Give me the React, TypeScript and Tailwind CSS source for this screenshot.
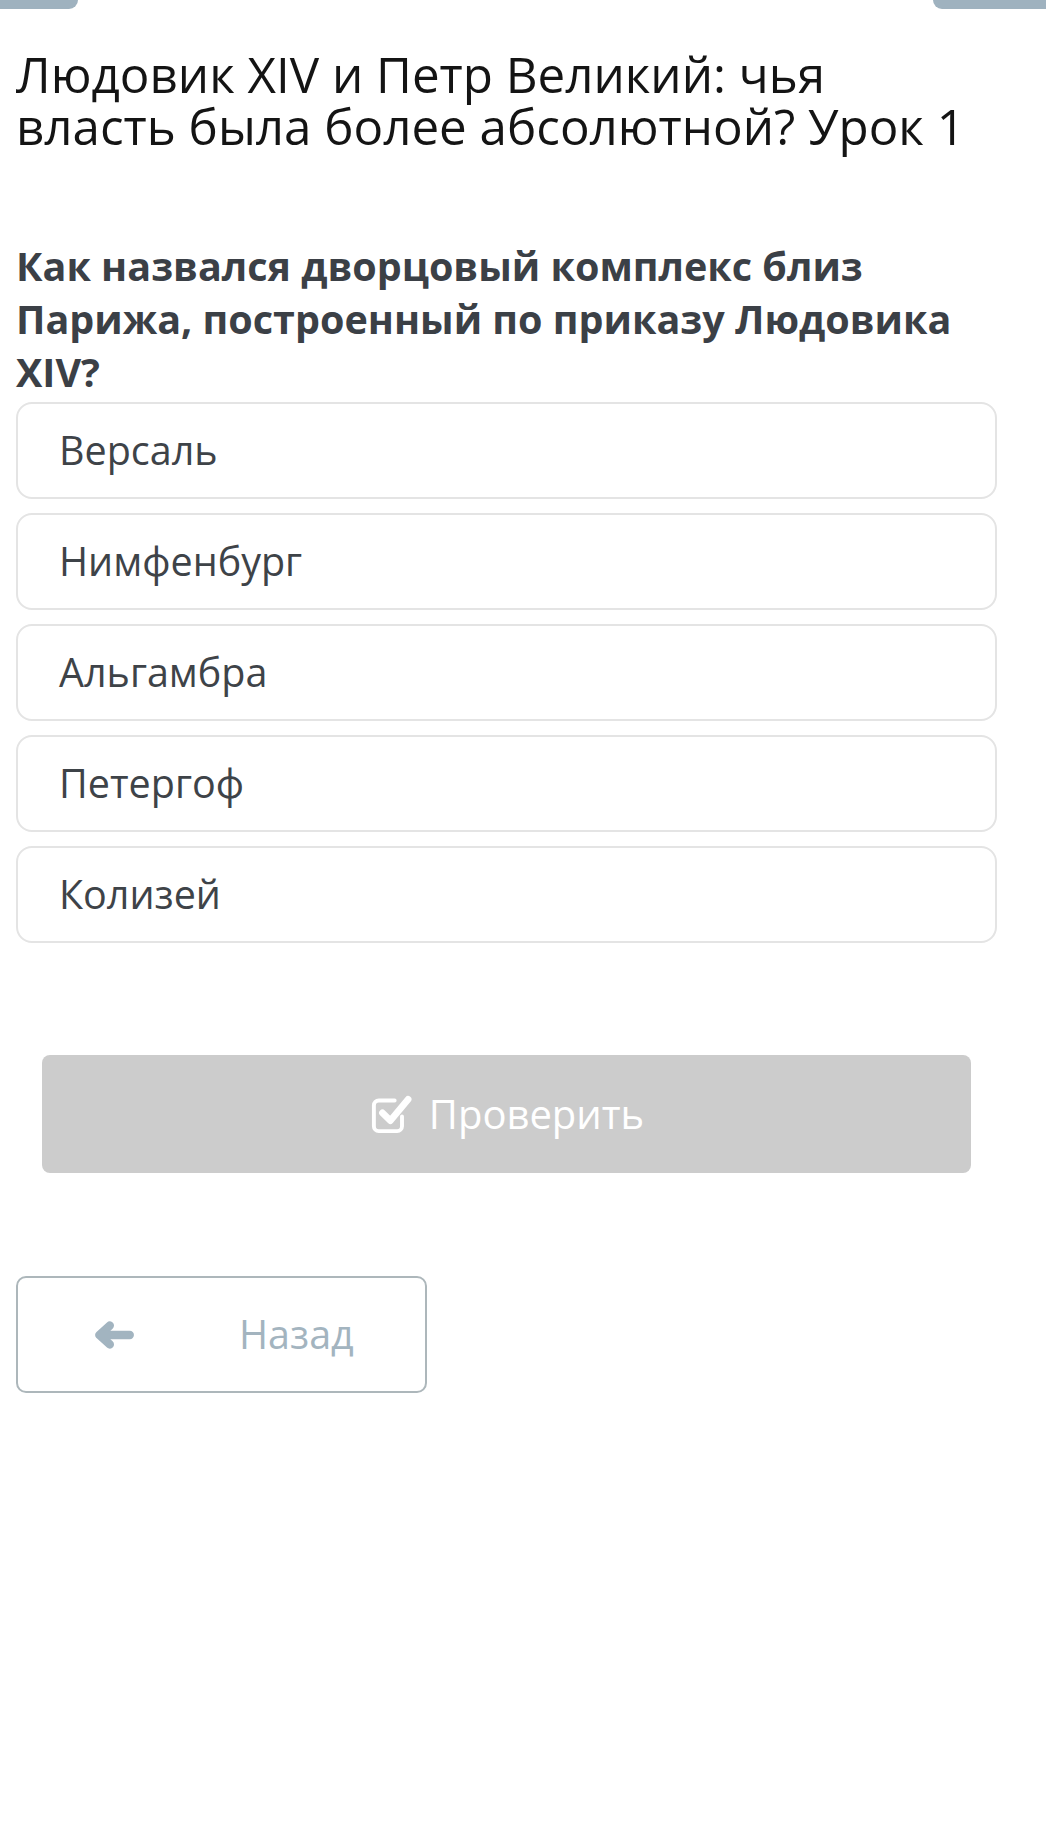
import React from "react";

const options = ["Версаль", "Нимфенбург", "Альгамбра", "Петергоф", "Колизей"];

function CheckSquareIcon() {
  return (
    <svg width="44" height="44" viewBox="0 0 36 36" fill="none">
      <path
        d="M27 20 V28 a4 4 0 0 1 -4 4 H8 a4 4 0 0 1 -4 -4 V11 a4 4 0 0 1 4 -4 H21"
        stroke="white"
        strokeWidth="3.2"
        strokeLinecap="round"
      />
      <path
        d="M11 17 L17.5 23.5 L32 6"
        stroke="white"
        strokeWidth="5.5"
        strokeLinecap="round"
        strokeLinejoin="round"
      />
    </svg>
  );
}

function ArrowLeftIcon() {
  return (
    <svg width="42" height="30" viewBox="0 0 40 28" fill="none">
      <path
        d="M35 14 H7 M16 5 L6 14 L16 23"
        stroke="#a2b4c0"
        strokeWidth="8"
        strokeLinecap="round"
        strokeLinejoin="round"
      />
    </svg>
  );
}

export default function App() {
  return (
    <div className="min-h-screen bg-white font-['Open_Sans',sans-serif]">
      {/* cut-off nav buttons at the very top */}
      <div className="flex justify-between">
        <div className="h-[9px] w-[78px] rounded-br-[10px] bg-[#9fb2bf]" />
        <div className="h-[9px] w-[113px] rounded-bl-[12px] bg-[#9fb2bf]" />
      </div>

      <div className="pl-[16px] pr-[49px]">
        <h1 className="mt-[39px] text-[49.3px] font-normal leading-[52px] text-[#141414]">
          Людовик XIV и Петр Великий: чья власть была более абсолютной? Урок 1
        </h1>

        <h2 className="mt-[88px] text-[39.5px] font-bold leading-[53px] text-[#3b4046]">
          Как назвался дворцовый комплекс близ Парижа, построенный по приказу Людовика XIV?
        </h2>

        <div className="mt-[3px] flex flex-col gap-[14px]">
          {options.map((o) => (
            <div
              key={o}
              className="flex h-[97px] items-center rounded-[16px] border-2 border-[#e4e4e4] bg-white pl-[41px] text-[39.5px] text-[#3e4348]"
            >
              {o}
            </div>
          ))}
        </div>

        <div className="mt-[112px] px-[26px]">
          <button className="flex h-[118px] w-full items-center justify-center gap-[16px] rounded-[8px] bg-[#cccccc] text-[40px] text-white">
            <CheckSquareIcon />
            <span>Проверить</span>
          </button>
        </div>

        <button className="mt-[103px] flex h-[117px] w-[411px] items-center rounded-[10px] border-2 border-[#adb7bb] bg-white pl-[75px] text-[39.5px] text-[#a3b4bf]">
          <ArrowLeftIcon />
          <span className="ml-[104px]">Назад</span>
        </button>
      </div>
    </div>
  );
}
